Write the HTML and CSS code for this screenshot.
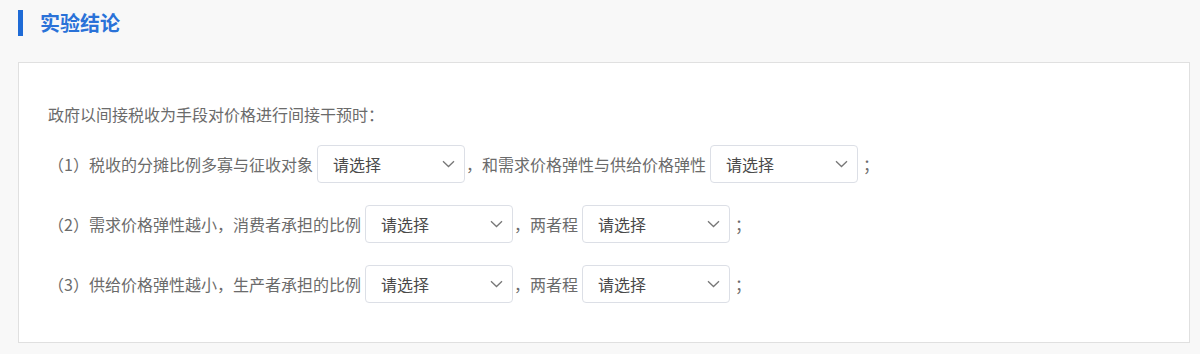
FILE: index.html
```html
<!DOCTYPE html>
<html lang="zh-CN">
<head>
<meta charset="utf-8">
<title>实验结论</title>
<link rel="stylesheet" href="styles.css">
</head>
<body>
<div class="page">
  <div class="section-title">
    <span class="bar"></span>
    <h2 class="title-text">实验结论</h2>
  </div>
  <div class="card">
    <p class="intro">政府以间接税收为手段对价格进行间接干预时：</p>
    <div class="row">
      <span class="label">（1）税收的分摊比例多寡与征收对象</span>
      <div class="select"><span class="placeholder">请选择</span><svg class="chev" width="13" height="8" viewBox="0 0 13 8"><path d="M1 1.2 L6.5 6.5 L12 1.2" fill="none" stroke="#777" stroke-width="1.3"/></svg></div>
      <span class="label">，和需求价格弹性与供给价格弹性</span>
      <div class="select"><span class="placeholder">请选择</span><svg class="chev" width="13" height="8" viewBox="0 0 13 8"><path d="M1 1.2 L6.5 6.5 L12 1.2" fill="none" stroke="#777" stroke-width="1.3"/></svg></div>
      <span class="label end">；</span>
    </div>
    <div class="row">
      <span class="label">（2）需求价格弹性越小，消费者承担的比例</span>
      <div class="select"><span class="placeholder">请选择</span><svg class="chev" width="13" height="8" viewBox="0 0 13 8"><path d="M1 1.2 L6.5 6.5 L12 1.2" fill="none" stroke="#777" stroke-width="1.3"/></svg></div>
      <span class="label">，两者程</span>
      <div class="select"><span class="placeholder">请选择</span><svg class="chev" width="13" height="8" viewBox="0 0 13 8"><path d="M1 1.2 L6.5 6.5 L12 1.2" fill="none" stroke="#777" stroke-width="1.3"/></svg></div>
      <span class="label end">；</span>
    </div>
    <div class="row">
      <span class="label">（3）供给价格弹性越小，生产者承担的比例</span>
      <div class="select"><span class="placeholder">请选择</span><svg class="chev" width="13" height="8" viewBox="0 0 13 8"><path d="M1 1.2 L6.5 6.5 L12 1.2" fill="none" stroke="#777" stroke-width="1.3"/></svg></div>
      <span class="label">，两者程</span>
      <div class="select"><span class="placeholder">请选择</span><svg class="chev" width="13" height="8" viewBox="0 0 13 8"><path d="M1 1.2 L6.5 6.5 L12 1.2" fill="none" stroke="#777" stroke-width="1.3"/></svg></div>
      <span class="label end">；</span>
    </div>
  </div>
</div>
</body>
</html>
```

FILE: styles.css
```css
* { box-sizing: border-box; }
html, body {
  margin: 0;
  padding: 0;
  background: #f8f8f8;
  font-family: "Noto Sans CJK SC", "Noto Sans", sans-serif;
  overflow: hidden;
}
.page {
  padding: 10px 10px 0 18px;
}
.section-title {
  display: flex;
  align-items: center;
  height: 26px;
}
.bar {
  width: 5px;
  height: 26px;
  background: #1f6bd6;
}
.title-text {
  margin: 0 0 0 17px;
  font-size: 20px;
  font-weight: bold;
  color: #2a72d8;
  line-height: 26px;
}
.card {
  margin-top: 26px;
  background: #fff;
  border: 1px solid #e0e0e0;
  padding: 39px 29px 28px;
  height: 281px;
}
.intro {
  margin: 0 0 8px;
  font-size: 16px;
  line-height: 24px;
  color: #6b6b6b;
}
.row {
  display: flex;
  align-items: center;
  height: 60px;
  font-size: 16px;
  color: #6b6b6b;
}
.label {
  white-space: nowrap;
}
.label.end {
  padding-left: 4px;
}
.select {
  width: 148px;
  height: 38px;
  margin: 0 1px 0 4px;
  border: 1px solid #dcdfe6;
  border-radius: 4px;
  background: #fff;
  display: flex;
  align-items: center;
  justify-content: space-between;
  padding: 0 9px 0 15px;
}
.placeholder {
  color: #4a4a4a;
  font-size: 16px;
}
.chev {
  display: block;
}
```
